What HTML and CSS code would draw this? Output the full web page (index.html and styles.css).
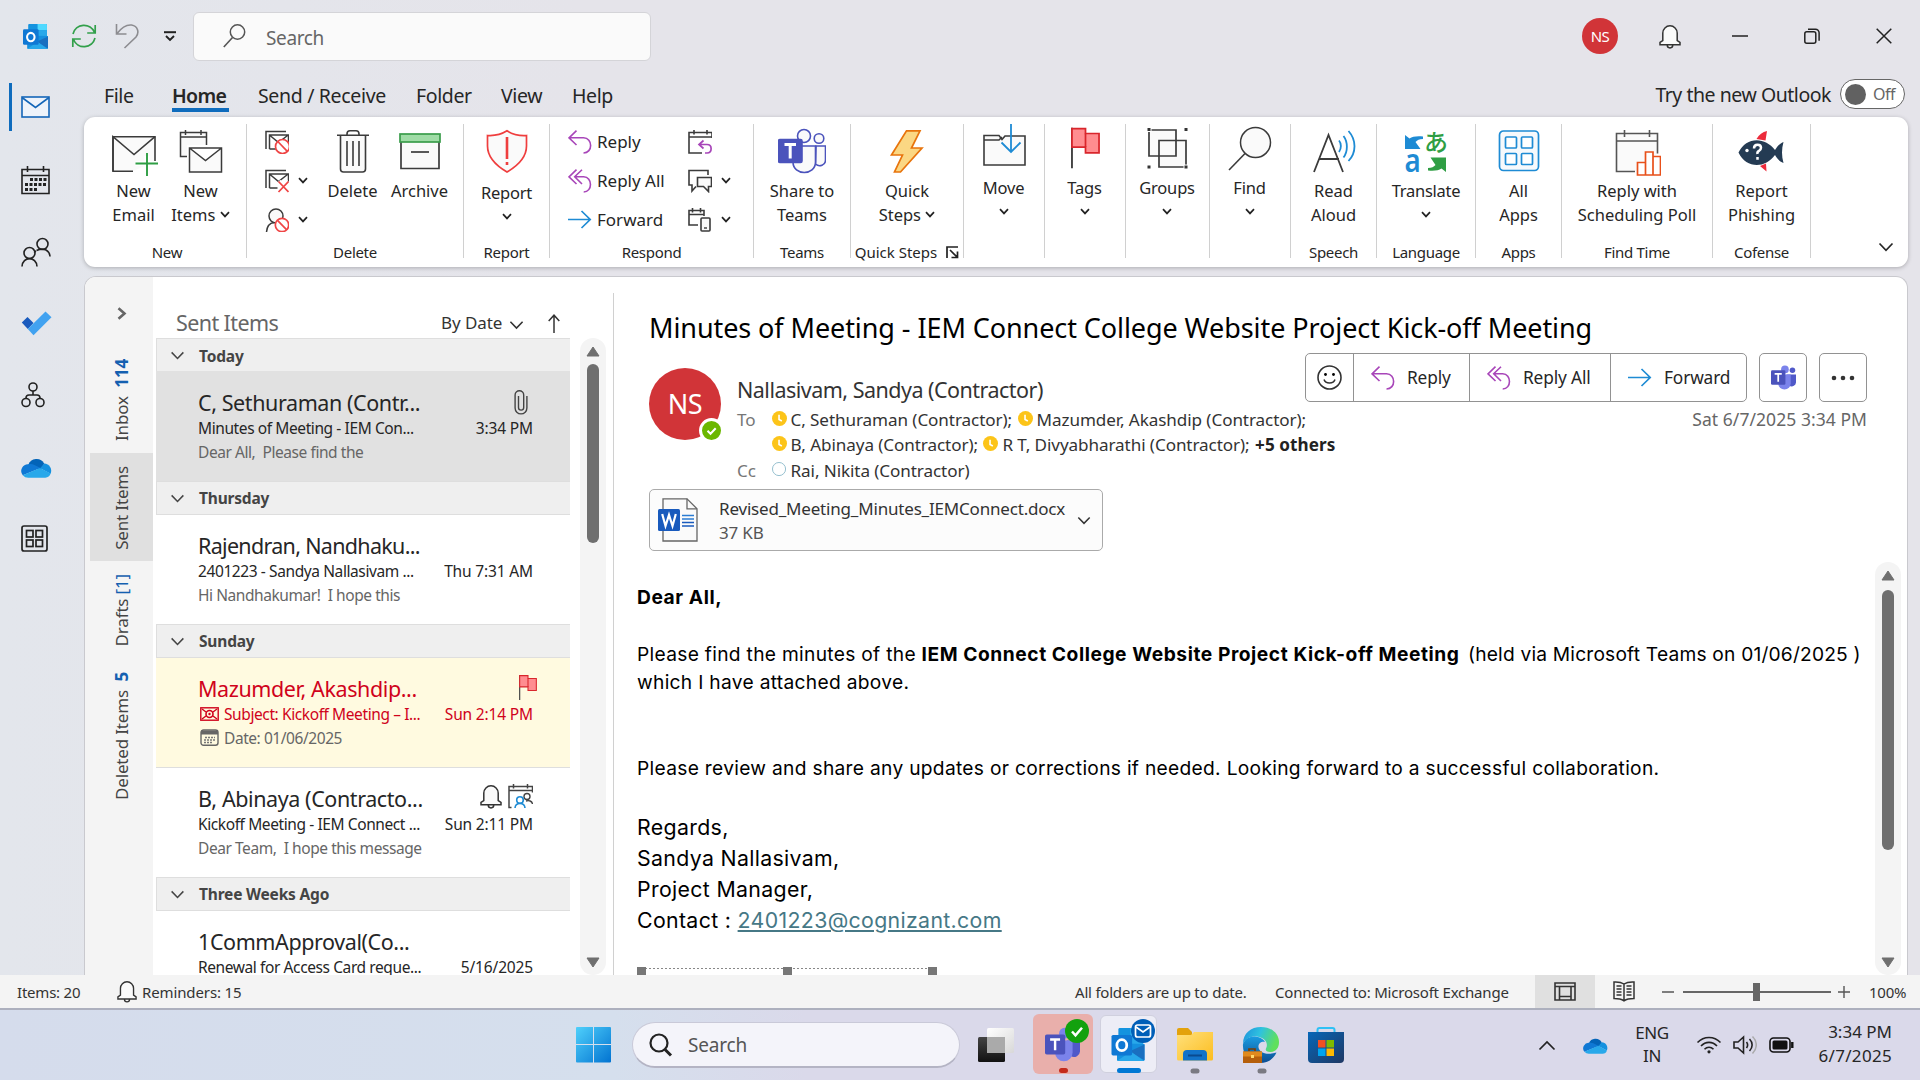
FILE: index.html
```html
<!DOCTYPE html>
<html lang="en">
<head>
<meta charset="utf-8">
<title>Sent Items - Outlook</title>
<link rel="stylesheet" href="styles.css">
</head>
<body>
<svg class="defs" width="0" height="0" aria-hidden="true">
  <defs>
    <linearGradient id="win" x1="0" y1="0" x2="1" y2="1"><stop offset="0" stop-color="#4fd0fb"/><stop offset="1" stop-color="#0273d1"/></linearGradient>
    <linearGradient id="fold" x1="0" y1="0" x2="1" y2="1"><stop offset="0" stop-color="#ffe07c"/><stop offset="1" stop-color="#fcbd1f"/></linearGradient>
    <linearGradient id="edge1" x1="0" y1="0" x2="1" y2="0.3"><stop offset="0" stop-color="#1c8fdc"/><stop offset=".5" stop-color="#2fc2df"/><stop offset="1" stop-color="#5fe05c"/></linearGradient>
    <linearGradient id="edge2" x1="0" y1="0" x2="0" y2="1"><stop offset="0" stop-color="#1b9de2"/><stop offset="1" stop-color="#0c4d92"/></linearGradient>
    <linearGradient id="store" x1="0" y1="0" x2="1" y2="1"><stop offset="0" stop-color="#0667b8"/><stop offset="1" stop-color="#1f3864"/></linearGradient>
    <linearGradient id="dark" x1="0" y1="0" x2="0" y2="1"><stop offset="0" stop-color="#444"/><stop offset="1" stop-color="#111"/></linearGradient>
    <linearGradient id="light" x1="0" y1="0" x2="1" y2="1"><stop offset="0" stop-color="#fff"/><stop offset="1" stop-color="#d8d8d8"/></linearGradient>
  </defs>
  <symbol id="chev" viewBox="0 0 10 7"><path d="M1 1.2 5 5.4 9 1.2" fill="none" stroke="currentColor" stroke-width="1.7"/></symbol>
  <symbol id="chev-lg" viewBox="0 0 16 10"><path d="M1.5 1.5 8 8.3 14.5 1.5" fill="none" stroke="currentColor" stroke-width="1.7"/></symbol>
  <symbol id="reply" viewBox="0 0 24 24"><path d="M8.5.7 1 7.8l7.500 7.2M1.200 7.800H15.500c9.500 0 9.500 15.200 0 15.200" fill="none" stroke="#a846b9" stroke-width="1.6"/></symbol>
  <symbol id="reply-all" viewBox="0 0 24 24"><path d="M8.500.7 1 7.800l7.500 7.200M14 .7 6.700 7.800 14 15M6.700 7.800h9c9 0 9 15.200 0 15.200" fill="none" stroke="#a846b9" stroke-width="1.6"/></symbol>
  <symbol id="forward" viewBox="0 0 24 24"><path d="M0 11.500H22.500M13.500 3l8.700 8.500-8.700 8.500" fill="none" stroke="#1e8bd4" stroke-width="1.7"/></symbol>
  <symbol id="bell" viewBox="0 0 22 24"><path d="M1 20.300v-2.300l2.800-2V8.500a7.200 7.200 0 0 1 14.400 0V16l2.800 2v2.300zM8.200 20.600a2.800 2.800 0 0 0 5.600 0" fill="#fafafa" stroke="#333" stroke-width="1.500"/></symbol>
  <symbol id="cloud" viewBox="0 0 30 20"><path d="M7 7.500a8.500 8.500 0 0 1 15.500-1.200L19 12z" fill="#0364b8"/><path d="M7.500 6.800a6.600 6.600 0 0 0-5.800 10.700L19 10.500 13 7.600a8 8 0 0 0-5.500-.8z" fill="#0f78d4"/><path d="M18.500 10.700l4-4.600A7 7 0 0 1 28.600 16z" fill="#1490df"/><path d="M1.700 17.500 18.300 10.400l10.400 5.500A6 6 0 0 1 23.500 20h-16a7 7 0 0 1-5.800-2.500z" fill="#28a8ea"/></symbol>
  <symbol id="outlook" viewBox="0 0 24 24"><path d="M6 0h16a1 1 0 0 1 1 1v12H5V1a1 1 0 0 1 1-1z" fill="#1493df"/><path d="M14 0h8a1 1 0 0 1 1 1v5h-9z" fill="#50d9ff"/><path d="M5 6h9v6H5z" fill="#0364b8"/><path d="M14 6h9v7h-9z" fill="#28a8ea"/><path d="M4 11l20 .6V23a1 1 0 0 1-1 1H5a1 1 0 0 1-1-1z" fill="#1490df"/><path d="M24 12v11.500L13 17z" fill="#1a6fc0"/><path d="M4 24l10-7 9.700 7z" fill="#28a8ea"/><rect y="5" width="15" height="15" rx="1.200" fill="#0f78d4"/><ellipse cx="7.500" cy="12.500" rx="3.600" ry="4" fill="none" stroke="#fff" stroke-width="2"/></symbol>
  <symbol id="flag" viewBox="0 0 30 42"><path d="M1 0v42" stroke="#444" stroke-width="2"/><path d="M1 1h14v5h14v20H15v-6H1z" fill="#ff8d90" stroke="#d9262c" stroke-width="1.800"/><path d="M15 6v14" stroke="#d9262c" stroke-width="1.800"/></symbol>
  <symbol id="clock" viewBox="0 0 16 16"><circle cx="8" cy="8" r="8" fill="#fcc419"/><path d="M7.500 4v5l3 1.600" fill="none" stroke="#fff" stroke-width="1.700"/></symbol>
  <symbol id="teams" viewBox="0 0 26 26"><circle cx="14.500" cy="4.600" r="4" fill="#7b83eb"/><circle cx="22.300" cy="5.500" r="2.900" fill="#5059c9"/><path d="M16 10h10v7.500a4.500 4.500 0 0 1-7 4z" fill="#5059c9"/><path d="M7.500 10h13v9a6.500 6.500 0 0 1-13 0z" fill="#7b83eb"/><rect y="5.500" width="15" height="15" rx="1.300" fill="#4b53bc"/><path d="M3.800 9.300h7.400M7.500 9.300v8" stroke="#fff" stroke-width="1.800"/></symbol>
</svg>

<div class="window">
  <header class="titlebar">
    <svg class="t-logo" width="25" height="25"><use href="#outlook"/></svg>
    <svg class="t-sync" width="26" height="26" viewBox="0 0 26 26"><path d="M2 11A11.300 11.300 0 0 1 23.500 9.500M24.200 2v8h-8M24 15A11.300 11.300 0 0 1 2.500 16.500M1.800 24v-8h8" fill="none" stroke="#32a04b" stroke-width="1.700"/></svg>
    <svg class="t-undo" width="24" height="26" viewBox="0 0 24 26"><path d="M1.500 1v10h10M2 10.500C7 4 12 1.500 16.500 2c6.500 1 8 7.500 4.500 12L9.500 25" fill="none" stroke="#8c8c90" stroke-width="1.600"/></svg>
    <svg class="t-more" width="12" height="11" viewBox="0 0 12 11"><path d="M0 1.200h12" stroke="#222" stroke-width="2"/><path d="M2 5l4 4 4-4" fill="none" stroke="#222" stroke-width="1.900"/></svg>
    <div class="searchbox">
      <svg width="23" height="24" viewBox="0 0 23 24"><circle cx="14.500" cy="8" r="7.200" fill="none" stroke="#555" stroke-width="1.500"/><path d="M9.500 13.500.8 23" stroke="#555" stroke-width="1.600"/></svg>
      <span>Search</span>
    </div>
    <div class="t-avatar">NS</div>
    <svg class="t-bell" width="22" height="25"><use href="#bell"/></svg>
    <svg class="t-min" width="16" height="16" viewBox="0 0 16 16"><path d="M0 8h16" stroke="#222" stroke-width="1.500"/></svg>
    <svg class="t-max" width="16" height="16" viewBox="0 0 16 16"><rect x=".8" y="3.800" width="11" height="11.400" rx="2" fill="none" stroke="#222" stroke-width="1.500"/><path d="M4 1.200h7.500a3.600 3.600 0 0 1 3.600 3.600v8" fill="none" stroke="#222" stroke-width="1.500"/></svg>
    <svg class="t-close" width="16" height="16" viewBox="0 0 16 16"><path d="M.7.7l14.600 14.600M15.300.7.7 15.300" stroke="#222" stroke-width="1.500"/></svg>
  </header>

  <div class="main">
    <nav class="apps">
      <div class="app active"><svg width="29" height="22" viewBox="0 0 29 22"><rect x="1" y="1" width="27" height="20" fill="#eef3fa" stroke="#1466b8" stroke-width="1.600"/><path d="M1 1.500 14.500 11.500 28 1.500" fill="none" stroke="#1466b8" stroke-width="1.600"/></svg></div>
      <div class="app"><svg width="29" height="29" viewBox="0 0 29 29"><path d="M1 3.500h27v24H1zM1 9.500h27M6.500 0v6M22.500 0v6" fill="none" stroke="#222" stroke-width="1.600"/><path d="M9 13.500h17M4 18.500h22M4 23.500h13" stroke="#222" stroke-width="3" stroke-dasharray="3 1.500"/></svg></div>
      <div class="app"><svg width="30" height="30" viewBox="0 0 30 30" fill="none" stroke="#222" stroke-width="1.600"><circle cx="21.500" cy="7" r="5.500"/><path d="M15.500 13.500c8-3.500 13 0 13.500 6M15 14c-1 .5-1.500 1-1.500 1.500"/><circle cx="8.500" cy="16" r="5.500"/><path d="M1 29.500C1.500 19 15.500 19 16 29.500"/></svg></div>
      <div class="app"><svg width="31" height="25" viewBox="0 0 31 25"><path d="M.8 11.500 6.500 6l6 6-5.700 6z" fill="#195abd"/><path d="M6.800 18 24.500.5 30.500 6.300 12.500 24.300z" fill="#41a2f0"/></svg></div>
      <div class="app"><svg width="24" height="26" viewBox="0 0 24 26" fill="none" stroke="#222" stroke-width="1.600"><circle cx="12" cy="5" r="4"/><circle cx="5" cy="20.500" r="4"/><circle cx="19" cy="20.500" r="4"/><path d="M12 9v4M5 16.500V16q0-3 3-3h8q3 0 3 3v.5"/></svg></div>
      <div class="app"><svg width="31" height="21"><use href="#cloud"/></svg></div>
      <div class="app"><svg width="27" height="27" viewBox="0 0 27 27" fill="none" stroke="#222" stroke-width="1.700"><rect x="1" y="1" width="25" height="25" rx="2"/><rect x="5.500" y="5.500" width="6.500" height="6.500"/><rect x="15" y="5.500" width="6.500" height="6.500"/><rect x="5.500" y="15" width="6.500" height="6.500"/><rect x="15" y="15" width="6.500" height="6.500"/></svg></div>
    </nav>

    <div class="content">
      <div class="tabs">
        <span class="tab tab-file">File</span>
        <span class="tab tab-home">Home</span>
        <span class="tab tab-send">Send / Receive</span>
        <span class="tab tab-folder">Folder</span>
        <span class="tab tab-view">View</span>
        <span class="tab tab-help">Help</span>
        <div class="try">Try the new Outlook <div class="toggle"><i></i>Off</div></div>
      </div>

      <section class="ribbon">
        <div class="group g-new">
          <div class="row">
            <div class="big"><svg viewBox="0 0 48 54"><path d="M45 37V12.700H3v34.600h20" fill="#fafafa" stroke="#3b3b3b" stroke-width="1.600"/><path d="M3 47.300V12.700L24 30.500 45 12.700" fill="none" stroke="#3b3b3b" stroke-width="1.600"/><path d="M37 32v19M25.500 39.500h23" stroke="#fff" stroke-width="5"/><path d="M37 29v23M25.500 39.500h23" stroke="#2f9e44" stroke-width="1.900"/></svg>New<br>Email</div>
            <div class="big"><svg viewBox="0 0 48 54" fill="#fafafa" stroke="#3b3b3b" stroke-width="1.500"><path d="M3.500 8.500h26v24h-26zM3.500 13h26M8.500 6v5M24 6v5"/><path d="M10 21h36v30H10z" fill="#fff" stroke="none"/><path d="M12.500 24h32v24h-32zl16 12.500L44.500 24"/></svg>New<br>Items <svg class="cv"><use href="#chev"/></svg></div>
          </div>
          <div class="label">New</div>
        </div>
        <div class="group g-delete">
          <div class="row">
            <div class="smalls">
              <div class="small"><svg class="ic" viewBox="0 0 24 24"><path d="M1 19V1.500h20M4.500 19V5h19v8M4.500 19h7M5 5.500l8.500 7L22.500 5.500" fill="none" stroke="#3b3b3b" stroke-width="1.500"/><circle cx="17.500" cy="16.500" r="7" fill="#fff" stroke="#ef4545" stroke-width="1.700"/><path d="M12.800 11.500l9.500 9.800" stroke="#ef4545" stroke-width="1.700"/></svg></div>
              <div class="small"><svg class="ic" viewBox="0 0 24 24"><path d="M1 19V1.500h20M4.500 19V5h19v8M4.500 19h8M5 5.500l8.500 7L22.500 5.500" fill="none" stroke="#3b3b3b" stroke-width="1.500"/><path d="M13.500 12.500l10 10.500M23.500 12.500l-10 10.500" stroke="#fff" stroke-width="5"/><path d="M13.500 12.500l10 10.500M23.500 12.500l-10 10.500" stroke="#ef4545" stroke-width="1.800"/></svg><svg class="cv"><use href="#chev"/></svg></div>
              <div class="small"><svg class="ic" viewBox="0 0 24 24"><circle cx="11" cy="8" r="7" fill="#fafafa" stroke="#3b3b3b" stroke-width="1.500"/><path d="M1.500 24C2 18 5 15 9 14.500" fill="none" stroke="#3b3b3b" stroke-width="1.500"/><circle cx="17" cy="17" r="6.700" fill="#fff" stroke="#ef4545" stroke-width="1.700"/><path d="M12.500 12.300l9 9.300" stroke="#ef4545" stroke-width="1.700"/></svg><svg class="cv"><use href="#chev"/></svg></div>
            </div>
            <div class="big"><svg viewBox="0 0 48 54" fill="none" stroke="#3b3b3b" stroke-width="1.600"><path d="M11.500 11.500V45q0 3 3 3h19q3 0 3-3V11.500" fill="#fafafa"/><path d="M8 11.300h32M18 11V10q0-3.200 3-3.200h6q3 0 3 3.200v1M18 17v25M24 17v25M30 17v25"/></svg>Delete</div>
            <div class="big"><svg viewBox="0 0 48 54"><path d="M5 17v27.500h38V17" fill="#fafafa" stroke="#3b3b3b" stroke-width="1.700"/><rect x="4" y="10" width="40" height="8" fill="#9fdca6" stroke="#3a9d4b" stroke-width="1.700"/><path d="M15 28h18" stroke="#3b3b3b" stroke-width="1.700"/></svg>Archive</div>
          </div>
          <div class="label">Delete</div>
        </div>
        <div class="group g-report">
          <div class="row">
            <div class="big drop2"><svg viewBox="0 0 48 54"><path d="M24 48C12 41 4.500 33 4.500 22V11.500C12 12 19 10 24 6.800 29 10 36 12 43.500 11.500V22C43.500 33 36 41 24 48z" fill="#fafafa" stroke="#ef3e3e" stroke-width="1.700"/><path d="M24 13v22M24 38v3" stroke="#ef3e3e" stroke-width="2.600"/></svg>Report<br><svg class="cv"><use href="#chev"/></svg></div>
          </div>
          <div class="label">Report</div>
        </div>
        <div class="group g-respond">
          <div class="row">
            <div class="smalls respond">
              <div class="small"><svg class="ic"><use href="#reply"/></svg>Reply</div>
              <div class="small"><svg class="ic"><use href="#reply-all"/></svg>Reply All</div>
              <div class="small"><svg class="ic"><use href="#forward"/></svg>Forward</div>
            </div>
            <div class="smalls">
              <div class="small"><svg class="ic" viewBox="0 0 24 24"><path d="M24 8V2.500H1V23h13M1 7h23M6 0v4.500M19 0v4.500" fill="none" stroke="#3b3b3b" stroke-width="1.600"/><path d="M15.500 10.500l-4.500 4 4.500 4M11 14.500h8c5.500 0 5.500 8.500 0 8.500h-2" fill="none" stroke="#a846b9" stroke-width="1.700"/></svg></div>
              <div class="small"><svg class="ic" viewBox="0 0 24 24"><path d="M20 6V1.500H1V16h3v6l4-4.500" fill="none" stroke="#3b3b3b" stroke-width="1.600"/><path d="M9.500 8.500h14v9h-3v5l-5-5h-6z" fill="#fafafa" stroke="#3b3b3b" stroke-width="1.600"/></svg><svg class="cv"><use href="#chev"/></svg></div>
              <div class="small"><svg class="ic" viewBox="0 0 24 24"><path d="M16 8V2.500H1V17h9M1 6.500h15M4.500 0v4.500M12.500 0v4.500" fill="none" stroke="#3b3b3b" stroke-width="1.600"/><rect x="13" y="10" width="9" height="13" rx="1" fill="#fafafa" stroke="#3b3b3b" stroke-width="1.600"/><path d="M16 20h3" stroke="#3b3b3b" stroke-width="1.400"/></svg><svg class="cv"><use href="#chev"/></svg></div>
            </div>
          </div>
          <div class="label">Respond</div>
        </div>
        <div class="group g-teams">
          <div class="row">
            <div class="big"><svg viewBox="0 0 48 54" fill="#fafafa" stroke="#4b53bc" stroke-width="1.600"><circle cx="26" cy="12" r="6.500"/><circle cx="41" cy="14.500" r="4.800"/><path d="M38 22h9.500v14c0 5-6 7.500-10 4z"/><path d="M15 22h22.500v16c0 14-22.500 14-22.500 0z"/><rect x=".5" y="15.500" width="23.500" height="23" rx="1.500" fill="#4b53bc"/><path d="M6.500 20.500h11.500M12.200 20.500v14" stroke="#fff" stroke-width="3"/></svg>Share to<br>Teams</div>
          </div>
          <div class="label">Teams</div>
        </div>
        <div class="group g-quick">
          <div class="row">
            <div class="big"><svg viewBox="0 0 48 54"><path d="M23.500 6.800h13.500L28.500 24H39L17.500 48h-6L19.500 31H8.500z" fill="#fbd783" stroke="#e8740c" stroke-width="1.700"/></svg>Quick<br>Steps <svg class="cv"><use href="#chev"/></svg></div>
          </div>
          <div class="label">Quick Steps <svg class="launch" width="13" height="13" viewBox="0 0 13 13"><path d="M1 12V1h11M4 4l7 7M5.500 11.500h6v-6" fill="none" stroke="#222" stroke-width="1.700"/></svg></div>
        </div>
        <div class="group g-move">
          <div class="row"><div class="big up"><svg viewBox="0 0 48 54"><path d="M4 41V11.500h15l3 4 3-3.500H45v29z" fill="#fafafa" stroke="#3b3b3b" stroke-width="1.600"/><path d="M4 16h15l3-3" fill="none" stroke="#3b3b3b" stroke-width="1.500"/><path d="M31 0v28M21.500 18.500 31 28l9.500-9.500" fill="none" stroke="#1e8bd4" stroke-width="1.800"/></svg>Move<br><svg class="cv"><use href="#chev"/></svg></div></div>
        </div>
        <div class="group g-tags">
          <div class="row"><div class="big up"><svg viewBox="0 0 48 54"><use href="#flag" x="10" y="3" width="29" height="42"/></svg>Tags<br><svg class="cv"><use href="#chev"/></svg></div></div>
        </div>
        <div class="group g-groups">
          <div class="row"><div class="big up"><svg viewBox="0 0 48 54"><path d="M6 6h27v26H6z" fill="#fafafa" stroke="#3b3b3b" stroke-width="1.700"/><path d="M16 16.500h27V43H16z" fill="#fafafa" stroke="#3b3b3b" stroke-width="1.700"/><path d="M16 32h17V16.500" fill="none" stroke="#3b3b3b" stroke-width="1.700"/><path d="M4 3.500h4v4H4zM41 3.500h4v4h-4zM4 41h4v4H4zM41 41h4v4h-4z" fill="#333" stroke="#fff"/></svg>Groups<br><svg class="cv"><use href="#chev"/></svg></div></div>
        </div>
        <div class="group g-find">
          <div class="row"><div class="big up"><svg viewBox="0 0 48 54"><circle cx="29.500" cy="18.500" r="15" fill="#fafafa" stroke="#3b3b3b" stroke-width="1.500"/><path d="M19 29.500 3 46" stroke="#3b3b3b" stroke-width="1.600"/></svg>Find<br><svg class="cv"><use href="#chev"/></svg></div></div>
        </div>
        <div class="group g-speech">
          <div class="row"><div class="big"><svg viewBox="0 0 48 54" fill="none"><path d="M4 48 18.500 11 33 48M8.500 35h20.500" stroke="#3b3b3b" stroke-width="1.800"/><path d="M29 16.500c2.500 3 2.500 8 0 11.500M33.500 12c4.500 6 4.500 15.500 0 21.500M38.500 7c8 9 8 21.500 0 30" stroke="#1e8bd4" stroke-width="1.800"/></svg>Read<br>Aloud</div></div>
          <div class="label">Speech</div>
        </div>
        <div class="group g-language">
          <div class="row"><div class="big"><svg class="glyphs" viewBox="0 0 48 54"><path d="M3 11l4.500 3.500c3-2 7-2.500 13.500-2v2.500c-4 .3-5.500 1-7.500 3l5 7H3z" fill="#1e8bd4"/><path d="M44 48l-4.500-3.500c-3 2-7 2.500-13.500 2v-2.500c4-.3 5.500-1 7.500-3l-5-7.500H44z" fill="#2f9e44"/><text x="2.500" y="47.500" font-family="Noto Sans" font-weight="600" font-size="32" fill="#1e8bd4" textLength="16" lengthAdjust="spacingAndGlyphs">a</text><text x="22" y="27" font-family="Noto Sans CJK JP" font-weight="500" font-size="24" fill="#2f9e44">あ</text></svg>Translate<br><svg class="cv"><use href="#chev"/></svg></div></div>
          <div class="label">Language</div>
        </div>
        <div class="group g-apps">
          <div class="row"><div class="big"><svg viewBox="0 0 48 54" fill="#fff" stroke="#1e8bd4" stroke-width="1.700"><rect x="4.500" y="7" width="39" height="39.500" rx="4" fill="#f6f9fc"/><rect x="10.500" y="13" width="11" height="11" rx="1"/><rect x="26.500" y="13" width="11" height="11" rx="1"/><rect x="10.500" y="29.500" width="11" height="11" rx="1"/><rect x="26.500" y="29.500" width="11" height="11" rx="1"/></svg>All<br>Apps</div></div>
          <div class="label">Apps</div>
        </div>
        <div class="group g-time">
          <div class="row"><div class="big wide"><svg viewBox="0 0 48 54"><path d="M22 47.500H3.500v-38h41v20M3.500 17h41M11.500 6v7M36.500 6v7" fill="#fafafa" stroke="#555" stroke-width="1.600"/><path d="M24.500 51V38.500h8V28h7.500v4.500h7.500V51zM32.500 38.500V51M40 32.500V51" fill="#fff" stroke="#e8501a" stroke-width="1.700"/></svg>Reply with<br>Scheduling Poll</div></div>
          <div class="label">Find Time</div>
        </div>
        <div class="group g-cofense">
          <div class="row"><div class="big wide"><svg viewBox="0 0 48 54"><path d="M19.500 15C22 10.500 25.500 8 30 7l-1.500 9.500zM23 42l6.500 5.500-.5-8z" fill="#ec2b3c"/><path d="M1.500 28.500C9 12.500 28 12.500 38 26c2-3 4.500-6.500 8.500-8-2 7-2 14 0 21-4-1.500-6.500-4.500-8.500-8C28 45 9 44.500 1.500 28.500z" fill="#243b53"/><circle cx="10" cy="26.500" r="1.700" fill="#fff"/><path d="M17 24.500q0-3.800 3.500-3.800t3.500 3.100q0 2-2 3T20.500 30M20.500 33v2.800" fill="none" stroke="#fff" stroke-width="2.500"/></svg>Report<br>Phishing</div></div>
          <div class="label">Cofense</div>
        </div>
        <div class="collapse"><svg width="16" height="10"><use href="#chev-lg"/></svg></div>
      </section>

      <section class="panel">
        <aside class="rail">
          <svg class="expand" width="10" height="13" viewBox="0 0 10 13"><path d="M1.500 1.200 7.500 6.500l-6 5.300" fill="none" stroke="#666" stroke-width="2.600"/></svg>
          <div class="folder f-inbox"><span>Inbox&nbsp; <b>114</b></span></div>
          <div class="folder f-sent"><span>Sent Items</span></div>
          <div class="folder f-drafts"><span>Drafts <em>[1]</em></span></div>
          <div class="folder f-deleted"><span>Deleted Items&nbsp; <b>5</b></span></div>
        </aside>

        <div class="listcol">
          <div class="listhead">
            <h2>Sent Items</h2>
            <span class="sort">By Date</span>
            <svg class="sortchev" width="15" height="10"><use href="#chev-lg"/></svg>
            <svg class="sortdir" width="12" height="19" viewBox="0 0 12 19"><path d="M6 19V1.200M.7 7 6 1.200 11.300 7" fill="none" stroke="#333" stroke-width="1.500"/></svg>
          </div>
          <div class="listbody">
            <div class="messages">
              <div class="day first"><svg width="15" height="9"><use href="#chev-lg"/></svg>Today</div>
              <div class="msg selected">
                <div class="who"><span>C, Sethuraman (Contr...</span><svg class="clip" width="14" height="26" viewBox="0 0 14 26"><path d="M4.500 7v11.500a2.600 2.600 0 0 0 5.200 0V6a4.300 4.300 0 0 0-8.600 0v13a5.900 5.900 0 0 0 11.800 0V7" fill="none" stroke="#444" stroke-width="1.400"/></svg></div>
                <div class="sub"><span>Minutes of Meeting - IEM Con...</span><time>3:34 PM</time></div>
                <div class="pre">Dear All,&nbsp; Please find the</div>
              </div>
              <div class="day"><svg width="15" height="9"><use href="#chev-lg"/></svg>Thursday</div>
              <div class="msg">
                <div class="who tight"><span>Rajendran, Nandhaku...</span></div>
                <div class="sub"><span>2401223 - Sandya Nallasivam ...</span><time>Thu 7:31 AM</time></div>
                <div class="pre">Hi Nandhakumar!&nbsp; I hope this</div>
              </div>
              <div class="day"><svg width="15" height="9"><use href="#chev-lg"/></svg>Sunday</div>
              <div class="msg flagged">
                <div class="who"><span>Mazumder, Akashdip...</span><svg class="mflag" width="18" height="25"><use href="#flag"/></svg></div>
                <div class="sub"><span><svg class="inl" width="19" height="14" viewBox="0 0 19 14"><rect x=".8" y=".8" width="17.400" height="12.400" fill="none" stroke="#d0021b" stroke-width="1.400"/><circle cx="9.500" cy="7" r="3.500" fill="none" stroke="#d0021b" stroke-width="1.600"/><circle cx="9.500" cy="7" r="1.200" fill="#d0021b"/><path d="M2 2l4 3M17 2l-4 3M2 12l4-3M17 12l-4-3" stroke="#d0021b" stroke-width="1.400"/></svg>Subject: Kickoff Meeting – I...</span><time>Sun 2:14 PM</time></div>
                <div class="pre"><svg class="inl" width="19" height="17" viewBox="0 0 19 17"><rect x="1" y="1" width="17" height="15.300" rx="2.500" fill="none" stroke="#666" stroke-width="1.400"/><path d="M1 1.500h17v4H1z" fill="#666"/><path d="M5 8.500h10M4 11h11M4 13.500h8" stroke="#777" stroke-width="1.500" stroke-dasharray="2 1"/></svg>Date: 01/06/2025</div>
              </div>
              <div class="msg">
                <div class="who"><span>B, Abinaya (Contracto...</span><svg class="mbell" width="22" height="25"><use href="#bell"/></svg><svg class="mcal" width="25" height="25" viewBox="0 0 25 25"><path d="M3.500 23.500H1V2.500h23.500v6M1 6.500h23.500M5.500 0v4.500M19.500 0v4.500" fill="none" stroke="#444" stroke-width="1.500"/><circle cx="19" cy="12.500" r="3" fill="none" stroke="#444" stroke-width="1.400"/><path d="M18 17c3-1 6 0 6.500 3" fill="none" stroke="#444" stroke-width="1.400"/><circle cx="12" cy="16" r="3.300" fill="none" stroke="#1e8bd4" stroke-width="1.600"/><path d="M7 24c.5-6 9.500-6 10 0" fill="none" stroke="#1e8bd4" stroke-width="1.600"/></svg></div>
                <div class="sub"><span>Kickoff Meeting - IEM Connect ...</span><time>Sun 2:11 PM</time></div>
                <div class="pre">Dear Team,&nbsp; I hope this message</div>
              </div>
              <div class="day"><svg width="15" height="9"><use href="#chev-lg"/></svg>Three Weeks Ago</div>
              <div class="msg">
                <div class="who"><span>1CommApproval(Co...</span></div>
                <div class="sub"><span>Renewal for Access Card reque...</span><time>5/16/2025</time></div>
              </div>
            </div>
            <div class="scroll"><svg width="14" height="11" viewBox="0 0 14 11"><path d="M7 1 13 10H1z" fill="#6f6f6f" stroke="#6f6f6f" stroke-linejoin="round"/></svg><i class="thumb-list"></i><svg class="down" width="14" height="11" viewBox="0 0 14 11"><path d="M7 10 13 1H1z" fill="#6f6f6f" stroke="#6f6f6f" stroke-linejoin="round"/></svg></div>
          </div>
        </div>

        <article class="reading">
          <h1>Minutes of Meeting - IEM Connect College Website Project Kick-off Meeting</h1>
          <div class="sender">
            <div class="avatar">NS<svg class="presence" width="25" height="25" viewBox="0 0 25 25"><circle cx="12.500" cy="12.500" r="11" fill="#6bb700" stroke="#fff" stroke-width="3"/><path d="M8.500 12.700l3 3 5.200-5.500" fill="none" stroke="#fff" stroke-width="2"/></svg></div>
            <div class="people">
              <div class="from">Nallasivam, Sandya (Contractor)</div>
              <div class="line"><label>To</label><svg><use href="#clock"/></svg><span>C, Sethuraman (Contractor);</span><svg><use href="#clock"/></svg><span>Mazumder, Akashdip (Contractor);</span></div>
              <div class="line"><label></label><svg><use href="#clock"/></svg><span>B, Abinaya (Contractor);</span><svg><use href="#clock"/></svg><span>R T, Divyabharathi (Contractor);</span><b>+5 others</b></div>
              <div class="line"><label>Cc</label><svg viewBox="0 0 16 16"><circle cx="7.500" cy="7.500" r="7" fill="#fff" stroke="#8fbccc"/></svg><span>Rai, Nikita (Contractor)</span></div>
            </div>
            <div class="acts">
              <div class="btnrow">
                <div class="btngroup">
                  <span class="b-smile"><svg width="25" height="25" viewBox="0 0 25 25"><circle cx="12.500" cy="12.500" r="11.500" fill="none" stroke="#333" stroke-width="1.600"/><circle cx="8.500" cy="9.500" r="1.400"/><circle cx="16.500" cy="9.500" r="1.400"/><path d="M7 14.500c1.500 4.500 9.500 4.500 11 0" fill="none" stroke="#333" stroke-width="1.500"/></svg></span>
                  <span class="b-reply"><svg width="24" height="24"><use href="#reply"/></svg>Reply</span>
                  <span class="b-all"><svg width="24" height="24"><use href="#reply-all"/></svg>Reply All</span>
                  <span class="b-fwd"><svg width="24" height="24"><use href="#forward"/></svg>Forward</span>
                </div>
                <span class="btn"><svg width="25" height="25"><use href="#teams"/></svg></span>
                <span class="btn"><svg width="24" height="6" viewBox="0 0 24 6" fill="#333"><circle cx="3" cy="3" r="2.300"/><circle cx="12" cy="3" r="2.300"/><circle cx="21" cy="3" r="2.300"/></svg></span>
              </div>
              <div class="date">Sat 6/7/2025 3:34 PM</div>
            </div>
          </div>
          <div class="attach">
            <svg class="word" width="40" height="44" viewBox="0 0 40 44"><path d="M5 .8h24l10 10V43H5z" fill="#fafafa" stroke="#666" stroke-width="1.300"/><path d="M29 .8v10h10" fill="none" stroke="#666" stroke-width="1.300"/><path d="M24 17.500h12M24 21h12" stroke="#2b7cd3" stroke-width="1.300"/><path d="M24 24.500h12M24 28h12" stroke="#185abd" stroke-width="1.300"/><rect y="11" width="22" height="22" rx="1.500" fill="#185abd"/><path d="M4.200 16l3.300 12L11 17l3.500 11 3.300-12" fill="none" stroke="#fff" stroke-width="2.200"/></svg>
            <div class="fname">Revised_Meeting_Minutes_IEMConnect.docx<br><small>37 KB</small></div>
            <svg class="achev" width="14" height="9"><use href="#chev-lg"/></svg>
          </div>
          <div class="bodywrap">
            <div class="mail">
              <p><b>Dear All,</b></p>
              <p class="gap1">Please find the minutes of the <b>IEM Connect College Website Project Kick-off Meeting</b>&nbsp; <span class="held">(held via Microsoft Teams on 01/06/2025 )</span><br>which I have attached above.</p>
              <p class="gap2">Please review and share any updates or corrections if needed. Looking forward to a successful collaboration.</p>
              <p class="sig">Regards,<br>Sandya Nallasivam,<br>Project Manager,<br>Contact : <a>2401223@cognizant.com</a></p>
              <div class="pic"><i></i><i></i><i></i></div>
            </div>
            <div class="scroll"><svg width="14" height="11" viewBox="0 0 14 11"><path d="M7 1 13 10H1z" fill="#6f6f6f" stroke="#6f6f6f" stroke-linejoin="round"/></svg><i class="thumb-mail"></i><svg class="down" width="14" height="11" viewBox="0 0 14 11"><path d="M7 10 13 1H1z" fill="#6f6f6f" stroke="#6f6f6f" stroke-linejoin="round"/></svg></div>
          </div>
        </article>
      </section>
    </div>
  </div>

  <footer class="status">
    <span class="s-items">Items: 20</span>
    <svg class="s-bell" width="20" height="23"><use href="#bell"/></svg>
    <span class="s-rem">Reminders: 15</span>
    <span class="s-sync">All folders are up to date.</span>
    <span class="s-conn">Connected to: Microsoft Exchange</span>
    <div class="s-view"><svg width="22" height="19" viewBox="0 0 22 19"><path d="M1 1h20v17H1zM1 4.500h20M5.500 4.500V18M17 4.500V18M5.500 14.500H17" fill="none" stroke="#333" stroke-width="1.600"/></svg></div>
    <svg class="s-book" width="22" height="21" viewBox="0 0 22 21"><path d="M11 3C8 1 4.500.8 1 1v16.500c3.500 0 7 .3 10 2.300 3-2 6.500-2.300 10-2.300V1c-3.500-.2-7 0-10 2zV20M3.500 5h5M3.500 8h5M3.500 11h5M3.500 14h5M13.500 5h5M13.500 8h5M13.500 11h5M13.500 14h5" fill="none" stroke="#333" stroke-width="1.500"/></svg>
    <svg class="s-zoom" width="188" height="18" viewBox="0 0 188 18"><path d="M0 9h12M176 9h12M182 3v12" stroke="#555" stroke-width="1.400"/><path d="M21 9h148" stroke="#666" stroke-width="2"/><path d="M91 0h7v18h-7z" fill="#666"/></svg>
    <span class="s-pct">100%</span>
  </footer>
</div>

<div class="taskbar">
  <svg class="k-win" width="35" height="36" viewBox="0 0 35 36"><path d="M1 0h16v17H0V1a1 1 0 0 1 1-1zM18 0h16a1 1 0 0 1 1 1v16H18zM0 18h17v17.500H1a1 1 0 0 1-1-1zM18 18h17v16.500a1 1 0 0 1-1 1H18z" fill="url(#win)"/></svg>
  <div class="k-search"><svg width="24" height="24" viewBox="0 0 24 24"><circle cx="10" cy="10" r="8.500" fill="none" stroke="#222" stroke-width="2.200"/><path d="M16 16.500l6 6" stroke="#222" stroke-width="3"/></svg>Search</div>
  <svg class="k-view" width="36" height="36" viewBox="0 0 36 36"><rect x="0" y="10" width="27" height="25" rx="1.500" fill="url(#dark)"/><rect x="9" y="1" width="27" height="25" rx="1.500" fill="url(#light)"/><path d="M9 10h18v16H9z" fill="#aaa"/></svg>
  <div class="k-tile k-teams">
    <svg width="60" height="60" viewBox="0 0 60 60"><svg x="12" y="13" width="35" height="35"><use href="#teams"/></svg><circle cx="44" cy="17" r="12" fill="#13a10e"/><path d="M39 17.500l3.500 3.800 6.500-7.500" fill="none" stroke="#fff" stroke-width="2.500"/><rect x="26" y="54" width="9" height="5" rx="2.500" fill="#c42b1c"/></svg>
  </div>
  <div class="k-tile k-outlook">
    <svg width="56" height="58" viewBox="0 0 56 58"><svg x="9" y="12" width="36" height="33"><use href="#outlook"/></svg><circle cx="42" cy="15" r="12" fill="#005fb8"/><rect x="34.500" y="9" width="15" height="12" rx="2" fill="none" stroke="#fff" stroke-width="1.700"/><path d="M35 11l7 5 7-5" fill="none" stroke="#fff" stroke-width="1.700"/><rect x="16" y="52" width="24" height="5" rx="2.500" fill="#0078d4"/></svg>
  </div>
  <svg class="k-files" width="38" height="48" viewBox="0 0 38 48"><path d="M1 2q0-2 2-2h9l4 4v8H1z" fill="#e3a20c"/><path d="M1 7h14l3-3h19v27q0 1.500-1.500 1.500H2.500Q1 32.500 1 31z" fill="url(#fold)"/><path d="M7 32.500V26q0-4 4-4h16q4 0 4 4v6.500z" fill="#1273c9"/><path d="M12 27.500h14" stroke="#0a4a8f" stroke-width="2"/><rect x="14.500" y="40.500" width="9" height="5" rx="2.500" fill="#7a7a82"/></svg>
  <svg class="k-edge" width="38" height="50" viewBox="0 0 38 50"><path d="M1 18C1 7 9 1 19 1c11 0 18 7 18 15 0 6-3 9.500-8 10-4 .3-6-1.500-5-3.500 3-6-2-10.500-7-11.500C10 9.500 4 12 1 18z" fill="url(#edge1)"/><path d="M1 18C3 12 10 9 16 11c4 1.200 6 3 7 5-4-1-8 2-6 7 2 4.500 9 6 17.500 3.500C31 34 25 37 18 37 8 37 0 29 1 18z" fill="url(#edge2)"/><path d="M1 25.500h19V37H1z" fill="#b55f0b"/><path d="M1 25.500h19v5H1z" fill="#e08a1d"/><path d="M7 25v-2h6v2" fill="none" stroke="#7a3d05" stroke-width="1.700"/><path d="M9 29h3v3H9z" fill="#ffd76a"/><rect x="15.500" y="42.500" width="9" height="5" rx="2.500" fill="#7a7a82"/></svg>
  <svg class="k-store" width="36" height="36" viewBox="0 0 36 36"><path d="M9.500 8V3q0-2 2-2h13q2 0 2 2v5" fill="none" stroke="#2fc1f5" stroke-width="2"/><path d="M0 5h36v27q0 4-4 4H4q-4 0-4-4z" fill="url(#store)"/><path d="M10 13h7.500v7.500H10z" fill="#f25022"/><path d="M18.500 13H26v7.500h-7.500z" fill="#7fba00"/><path d="M10 21.500h7.500V29H10z" fill="#00a4ef"/><path d="M18.500 21.500H26V29h-7.500z" fill="#ffb900"/></svg>
  <svg class="k-up" width="18" height="11" viewBox="0 0 18 11"><path d="M1.500 9.500 9 2l7.500 7.500" fill="none" stroke="#222" stroke-width="1.700"/></svg>
  <svg class="k-cloud" width="25" height="17"><use href="#cloud"/></svg>
  <div class="k-lang">ENG<br>IN</div>
  <svg class="k-wifi" width="26" height="18" viewBox="0 0 26 18" fill="none" stroke="#222" stroke-width="1.600"><path d="M1.500 6.500C8-.2 18-.2 24.500 6.500M5 10c4.500-4.800 11.500-4.800 16 0M8.500 13.300c2.600-2.700 6.400-2.700 9 0"/><circle cx="13" cy="15.800" r="1.600" fill="#222" stroke="none"/></svg>
  <svg class="k-vol" width="24" height="20" viewBox="0 0 24 20" fill="none" stroke="#222" stroke-width="1.600"><path d="M1 7v6h4l5.500 5V2L5 7zM13.500 7c1.500 2 1.500 4 0 6M16.500 4c3.500 3.500 3.500 8.500 0 12"/><path d="M19.500 1.500c5 5 5 12 0 17" stroke="#aaa"/></svg>
  <svg class="k-bat" width="25" height="16" viewBox="0 0 25 16"><rect x="1" y="1" width="20" height="14" rx="3.500" fill="none" stroke="#111" stroke-width="1.600"/><rect x="3.500" y="3.500" width="15" height="9" rx="1.500" fill="#111"/><path d="M23.300 5v6" stroke="#111" stroke-width="2.400"/></svg>
  <div class="k-time">3:34 PM<br><span>6/7/2025</span></div>
</div>
</body>
</html>
```

FILE: styles.css
```css
* { box-sizing: border-box; }
html, body { margin: 0; height: 1080px; overflow: hidden; }
body {
  font-family: "Noto Sans", "Open Sans", sans-serif;
  color: #262626;
  background: #e5e5eb;
  font-size: 17px;
}
h1, h2, p { margin: 0; font-weight: 400; }
svg { display: block; flex: none; }
.defs { position: absolute; }
.window { height: 1010px; display: flex; flex-direction: column; background: linear-gradient(90deg, #e3e6ec, #e5e4ea 30%, #e5e4ea); }

/* title bar */
.titlebar { height: 72px; display: flex; align-items: center; padding-left: 23px; flex: none; }
.t-sync { margin-left: 23px; }
.t-undo { margin-left: 18px; }
.t-more { margin-left: 25px; }
.searchbox {
  width: 458px; height: 49px; margin-left: 17px; padding-left: 29px;
  display: flex; align-items: center; gap: 20px;
  background: #fafafa; border: 1px solid #d4d4d8; border-radius: 6px;
  color: #666; font-size: 19px; letter-spacing: -0.02em;
}
.searchbox span { padding-top: 3px; }
.t-avatar {
  width: 36px; height: 36px; border-radius: 50%; margin-left: 931px;
  background: #d13438; color: #fff; font-size: 15px; text-align: center; line-height: 37px; letter-spacing: -0.03em;
}
.t-bell { margin-left: 41px; }
.t-min { margin-left: 51px; }
.t-max { margin-left: 56px; }
.t-close { margin-left: 56px; }

.main { flex: 1; min-height: 0; display: flex; }

/* app bar */
.apps { width: 84px; flex: none; display: flex; flex-direction: column; padding-top: 11px; }
.app { height: 71.7px; padding-left: 21px; display: flex; align-items: center; }
.app.active { height: 48px; margin-bottom: 13.5px; padding-left: 9px; border-left: 3px solid #0f6cbd; margin-left: 9px; }

.content { flex: 1; min-width: 0; display: flex; flex-direction: column; }

/* tabs */
.tabs { height: 45px; flex: none; display: flex; padding-left: 20px; font-size: 19.5px; letter-spacing: -0.02em; line-height: 48px; }
.tab { white-space: nowrap; flex: none; }
.tab-file { width: 68px; }
.tab-home { width: 57px; margin-right: 29px; height: 40px; border-bottom: 4px solid #0f6cbd; font-weight: 600; letter-spacing: -0.035em; }
.tab-send { width: 158px; letter-spacing: -0.017em; }
.tab-folder { width: 85px; }
.tab-view { width: 71px; }
.tab-help { width: 60px; }
.try { margin-left: auto; margin-right: 15px; display: flex; line-height: 46px; gap: 9px; letter-spacing: -0.024em; }
.toggle {
  width: 65px; height: 30px; margin-top: 7px; padding: 0 9px 0 4px; display: flex; align-items: center; justify-content: space-between;
  border: 1.5px solid #666; border-radius: 16px; background: #fff; color: #666; font-size: 16px; line-height: 26px; letter-spacing: -0.03em;
}
.toggle i { width: 21px; height: 21px; border-radius: 50%; background: #616161; }

/* ribbon */
.ribbon {
  width: 1824px; height: 150px; flex: none; display: flex; align-items: flex-start; padding-top: 7px;
  background: #fff; border-radius: 11px; box-shadow: 0 1px 4px rgba(0, 0, 0, .25);
}
.group { height: 134px; border-right: 1px solid #d0d0d0; display: grid; grid-template-rows: 118px 20px; flex: none; }
.row { display: flex; justify-content: center; }
.label { text-align: center; font-size: 15px; line-height: 20px; letter-spacing: -0.02em; white-space: nowrap; }
.g-new { width: 163px; padding-left: 4px; }
.g-delete { width: 217px; }
.g-report { width: 86px; }
.g-respond { width: 204px; }
.g-teams { width: 97px; }
.g-quick { width: 113px; }
.g-move { width: 81px; }
.g-tags { width: 81px; }
.g-groups { width: 84px; }
.g-find { width: 81px; }
.g-speech { width: 86px; }
.g-language { width: 99px; }
.g-apps { width: 86px; }
.g-time { width: 151px; }
.g-cofense { width: 98px; }
.g-respond .label { padding-right: 7px; }
.g-quick .label { display: flex; justify-content: center; align-items: center; gap: 9px; letter-spacing: 0; }
.big { width: 67px; text-align: center; line-height: 24px; font-size: 16.5px; white-space: nowrap; }
.g-teams .big, .g-quick .big, .g-language .big { width: 80px; }
.g-language .big, .g-report .big { letter-spacing: -0.015em; }
.big > svg:first-child { width: 48px; height: 54px; margin: 0 auto 1px; }
.glyphs { overflow: visible; }
.big.wide { width: auto; }
.big .cv { display: inline-block; vertical-align: 3px; margin-left: 2px; }
.cv { width: 10px; height: 7px; color: #222; }
.big br + .cv { margin: 0; vertical-align: 3px; }
.big.drop2 > svg:first-child { margin-bottom: 3px; }
.big.up > svg:first-child { margin-bottom: -2px; }
.up { letter-spacing: -0.01em; }
.g-move .row, .g-tags .row, .g-groups .row, .g-find .row { padding-right: 1px; }
.smalls { margin-top: -2px; width: 73px; padding-left: 1px; }
.g-delete .row { justify-content: flex-start; padding-left: 17px; }
.g-delete .smalls { width: 55px; }
.small { height: 39px; display: flex; align-items: center; font-size: 17px; white-space: nowrap; }
.small .ic { width: 24px; height: 24px; }
.small .cv { margin-left: 9px; }
.g-respond .row { justify-content: flex-start; padding-left: 17px; }
.respond { width: 120px; }
.respond .ic { margin-right: 5px; }
.collapse { margin-left: auto; margin-right: 14px; padding-top: 118px; }

/* main panel */
.panel {
  width: 1824px; flex: 1; min-height: 0; margin-top: 9px; display: flex; overflow: hidden;
  background: #fff; border: 1px solid #c9c9ce; border-bottom: 0; border-radius: 12px 12px 0 0;
}
.rail { width: 68px; flex: none; background: #f4f4f4; padding: 30px 0 0 5px; }
.expand { margin: 0 0 25px 27px; }
.folder { display: flex; align-items: center; justify-content: center; color: #444; font-size: 17px; letter-spacing: -0.01em; padding-top: 1px; }
.folder span { writing-mode: vertical-rl; transform: rotate(180deg); white-space: nowrap; }
.folder b, .folder em { color: #1460b0; font-style: normal; }
.f-inbox { height: 108px; }
.f-sent { height: 108px; background: #e0e0e0; padding-top: 2px; }
.f-drafts { height: 98px; }
.f-deleted { height: 153px; }

.listcol { width: 461px; flex: none; display: flex; flex-direction: column; border-right: 1px solid #d0d0d0; margin-top: 16px; }
.listhead { height: 45px; flex: none; display: flex; padding-left: 23px; }
.listhead h2 { width: 265px; font-size: 21.5px; line-height: 59px; color: #666; letter-spacing: -0.028em; }
.sort { font-size: 17px; line-height: 60px; color: #333; width: 68px; letter-spacing: -0.005em; }
.sortchev { margin: 27px 24px 0 0; color: #333; }
.sortdir { margin-top: 21px; }
.listbody { flex: 1; min-height: 0; display: flex; overflow: hidden; }
.messages { width: 414px; margin-left: 3px; flex: none; }
.day {
  height: 33.5px; display: flex; align-items: center; padding: 0 0 0 13px; gap: 14px;
  background: #efefef; border: 1px solid #dedede; border-right: 0;
  font-size: 15.500px; font-weight: 700; color: #444; letter-spacing: -0.012em;
}
.day svg { color: #444; }
.day.first { height: 32.5px; border-bottom: 0; padding-top: 2px; }
.msg { height: 109.5px; padding: 17px 37px 0 42px; }
.msg.selected { height: 110.9px; padding-top: 18px; background: #e1e1e1; }
.msg.flagged { height: 110px; background: #fffae0; border-bottom: 1px solid #dedede; }
.who { height: 28px; line-height: 28px; font-size: 21.5px; letter-spacing: -0.019em; display: flex; white-space: nowrap; }
.who.tight { letter-spacing: -0.032em; }
.who span { flex: 1; }
.clip { margin: 0 5px 0 0; }
.mflag { margin: 0 -4px 0 0; }
.mbell { margin: -1px 6px 0 0; }
.mcal { margin: -1px 0 0 0; }
.sub { margin-top: -1px; line-height: 24px; font-size: 15.5px; letter-spacing: -0.026em; display: flex; justify-content: space-between; white-space: nowrap; }
.sub time { letter-spacing: -0.01em; }
.sub span, .pre { display: flex; align-items: center; }
.pre { line-height: 24px; font-size: 15.5px; letter-spacing: -0.028em; color: #666; }
.inl { margin: 0 5px 0 2px; }
.flagged .who, .flagged .sub { color: #d0021b; }

.scroll { width: 26px; background: #f4f4f4; border-radius: 13px; display: flex; flex-direction: column; align-items: center; padding: 8px 0 7px; flex: none; }
.listbody .scroll { margin-left: 10px; }
.scroll i { width: 12px; border-radius: 6px; background: #6f6f6f; }
.scroll .down { margin-top: auto; }
.thumb-list { height: 179px; margin-top: 7px; }
.thumb-mail { height: 260px; margin-top: 9px; }

/* reading pane */
.reading { flex: 1; min-width: 0; padding: 33px 0 0 35px; display: flex; flex-direction: column; }
.reading h1 { font-size: 27px; line-height: 36px; letter-spacing: -0.003em; color: #000; white-space: nowrap; flex: none; }
.sender { height: 121px; margin-top: 22px; padding-right: 40px; display: flex; flex: none; }
.avatar { width: 72px; height: 72px; flex: none; border-radius: 50%; background: #d13438; color: #fff; font-size: 27px; line-height: 72px; text-align: center; position: relative; letter-spacing: -0.02em; }
.presence { position: absolute; right: -3px; bottom: -3px; }
/* recipient lines may run on beneath the action buttons */
.people { flex: 0 0 540px; min-width: 0; margin: 8px 0 0 16px; white-space: nowrap; }
.from { font-size: 21.5px; line-height: 28px; letter-spacing: -0.024em; color: #333; margin-bottom: 2.500px; }
.line { height: 25.500px; line-height: 25px; font-size: 17.1px; letter-spacing: -0.005em; display: flex; color: #333; }
.line label { width: 34.5px; color: #777; flex: none; }
.line svg { width: 15px; height: 15px; margin: 4px 4px 0 0; }
.line span { margin-right: 5.500px; flex: none; }
.line b { color: #222; letter-spacing: 0.005em; flex: none; }
.acts { margin: -15px 0 0 auto; flex: none; }
.btnrow { display: flex; gap: 12px; }
.btngroup, .btn { height: 49px; border: 1.500px solid #929292; border-radius: 5px; display: flex; align-items: center; }
.btn { width: 48px; justify-content: center; }
.btngroup span { height: 100%; display: flex; align-items: center; border-left: 1px solid #929292; gap: 12px; font-size: 17.3px; letter-spacing: -0.008em; white-space: nowrap; }
.btngroup .b-smile { width: 47px; border: 0; justify-content: center; }
.b-reply { width: 116px; padding-left: 17px; }
.b-all { width: 141px; padding-left: 17px; }
.b-fwd { width: 136px; padding-left: 17px; }
.date { line-height: 25px; margin-top: 5px; font-size: 17.5px; letter-spacing: 0.003em; color: #666; text-align: right; }
.attach { width: 454px; height: 62px; flex: none; display: flex; padding-left: 8px; align-items: center; background: #fcfcfc; border: 1px solid #aaa; border-radius: 5px; color: #333; }
.fname { margin-left: 21px; width: 358px; line-height: 24px; padding-top: 1px; font-size: 17px; letter-spacing: -0.011em; white-space: nowrap; }
.fname small { font-size: 17px; color: #555; }
.achev { color: #333; }
.bodywrap { flex: 1; min-height: 0; margin: 11px 6px 0 -12px; display: flex; }
.mail { flex: 1; min-width: 0; padding-top: 21px; font-family: Inter, sans-serif; font-size: 19.2px; line-height: 28.400px; letter-spacing: 0.0155em; color: #000; white-space: nowrap; overflow: hidden; }
.mail b { letter-spacing: 0.029em; }
.held { margin-left: -3px; letter-spacing: 0.01em; }
.gap1 { margin-top: 28.500px; }
.gap2 { margin-top: 57px; }
.sig { margin-top: 30px; font-size: 21.3px; line-height: 31px; letter-spacing: 0.016em; }
.sig a { color: #467886; text-decoration: underline; }
.pic { width: 300px; height: 8px; margin-top: 30.500px; display: flex; justify-content: space-between; background: repeating-linear-gradient(90deg, #888 0 2px, transparent 2px 4px) 0 1px / 100% 1px no-repeat; }
.pic i { width: 9px; height: 8px; background: #777; }

/* status bar */
.status { height: 35px; flex: none; display: flex; align-items: center; background: #f4f4f4; border-bottom: 2px solid #adb0be; font-size: 15px; letter-spacing: -0.014em; white-space: nowrap; color: #333; }
.s-items { margin-left: 17px; width: 100px; }
.s-rem { margin-left: 5px; width: 933px; letter-spacing: -0.008em; }
.s-sync { width: 200px; }
.s-conn { width: 260px; }
.s-view { width: 60px; height: 33px; background: #e0e0e0; display: flex; align-items: center; justify-content: center; }
.s-book { margin-left: 18px; }
.s-zoom { margin-left: 27px; }
.s-pct { margin-left: 19px; }

/* taskbar */
.taskbar { height: 70px; display: flex; align-items: center; background: linear-gradient(90deg, #d5dcec 0, #d5dfed 32%, #dad9ea 42%, #dad9ea 100%); }
.k-win { margin-left: 576px; }
.k-search { width: 328px; height: 46px; margin: 0 0 0 21px; padding-left: 16px; display: flex; align-items: center; gap: 15px; border-radius: 23px; background: #f4f4fa; border: 1px solid #c9c9d8; border-bottom: 2px solid #b4b4c4; color: #555; font-size: 19px; letter-spacing: -0.01em; }
.k-view { margin-left: 18px; }
.k-tile { border-radius: 6px; }
.k-teams { width: 60px; height: 60px; margin: -2px 0 0 19px; background: #e9afab; }
.k-outlook { width: 57px; height: 58px; margin: -2px 0 0 7px; background: #ededf6; border: 1px solid #d0d0de; }
.k-files { margin: 14px 0 0 19px; }
.k-edge { margin: 12px 0 0 28px; }
.k-store { margin-left: 28px; }
.k-up { margin-left: 194px; }
.k-cloud { margin-left: 27px; }
.k-lang { margin: -2px 0 0 25px; width: 38px; text-align: center; line-height: 23px; font-size: 17px; letter-spacing: -0.02em; }
.k-wifi { margin-left: 25px; }
.k-vol { margin-left: 11px; }
.k-bat { margin-left: 12px; }
.k-time { margin: -2px 28px 0 auto; text-align: right; font-size: 17px; line-height: 24px; letter-spacing: 0; }
.k-time span { letter-spacing: 0.018em; }
```
